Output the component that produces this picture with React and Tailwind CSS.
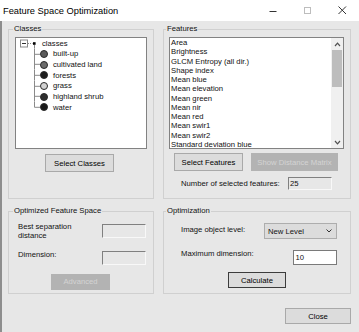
import clsx from "clsx";

const classes = [
  { name: "built-up", color: "#5a5a5a" },
  { name: "cultivated land", color: "#6c6c6c" },
  { name: "forests", color: "#1e1e1e" },
  { name: "grass", color: "#d2d2d2" },
  { name: "highland shrub", color: "#2e2e2e" },
  { name: "water", color: "#1a1a1a" },
];

const features = [
  "Area",
  "Brightness",
  "GLCM Entropy (all dir.)",
  "Shape index",
  "Mean blue",
  "Mean elevation",
  "Mean green",
  "Mean nir",
  "Mean red",
  "Mean swir1",
  "Mean swir2",
  "Standard deviation blue",
];

function Btn({ children, className, disabled }) {
  return (
    <button
      className={clsx(
        "flex items-center justify-center border leading-[9px]",
        disabled
          ? "bg-[#b3b3b3] border-[#b3b3b3] text-[#d4d4d4]"
          : "bg-[#dcdcdc] border-[#a9a9a9] text-black",
        className
      )}
    >
      {children}
    </button>
  );
}

function Group({ label, labelLeft, className, children }) {
  return (
    <div className={clsx("relative border border-[#d0d0d0]", className)}>
      <span
        className={clsx(
          "absolute top-[-6px] bg-[#e7e7e7] px-[1px] leading-[9px]",
          labelLeft
        )}
      >
        {label}
      </span>
      {children}
    </div>
  );
}

function InsetBox({ children, className }) {
  return (
    <div
      className={clsx(
        "border border-t-[#808080] border-l-[#808080] border-r-[#f8f8f8] border-b-[#f8f8f8] leading-[9px]",
        className
      )}
    >
      {children}
    </div>
  );
}

function ClassTree() {
  return (
    <div className="ml-[6px] mt-[7px] w-[132px] h-[112px] border border-[#828282] bg-white">
      <div className="flex items-center h-[10.67px] pl-[4px]">
        <svg width="22" height="10.67" className="shrink-0">
          <rect x="0.5" y="2" width="7" height="7" fill="#fff" stroke="#8a8a8a" />
          <line x1="2" y1="5.5" x2="6" y2="5.5" stroke="#333" />
          <line x1="8" y1="5.5" x2="12.5" y2="5.5" stroke="#8a8a8a" strokeDasharray="1 1" />
          <rect x="13" y="4.2" width="2.6" height="2.6" fill="#000" />
          <line x1="14.5" y1="7" x2="14.5" y2="10.67" stroke="#8a8a8a" />
        </svg>
        <span className="leading-[9px]">classes</span>
      </div>
      {classes.map((c, i) => (
        <div key={c.name} className="flex items-center h-[10.67px] pl-[18px]">
          <svg width="6" height="10.67" className="shrink-0">
            <line
              x1="0.5"
              y1="0"
              x2="0.5"
              y2={i === classes.length - 1 ? 5.3 : 10.67}
              stroke="#8a8a8a"
            />
            <line x1="0.5" y1="5.3" x2="6" y2="5.3" stroke="#8a8a8a" />
          </svg>
          <div
            className="w-[8px] h-[8px] rounded-full border border-[#2a2a2a] shrink-0"
            style={{ backgroundColor: c.color }}
          />
          <span className="ml-[5px] leading-[9px]">{c.name}</span>
        </div>
      ))}
    </div>
  );
}

function FeatureList() {
  return (
    <div className="ml-[5px] mt-[7px] w-[175px] h-[112px] border border-[#828282] bg-white flex">
      <div className="flex-1 overflow-hidden pl-[1px]">
        {features.map((f) => (
          <div key={f} className="h-[9.27px] leading-[9.27px] whitespace-nowrap">
            {f}
          </div>
        ))}
      </div>
      <div className="w-[12px] bg-[#f0f0f0] flex flex-col">
        <div className="h-[12px] flex items-center justify-center">
          <svg width="7" height="5">
            <polyline points="1,4 3.5,1.2 6,4" fill="none" stroke="#505050" strokeWidth="1.2" />
          </svg>
        </div>
        <div className="h-[37px] mx-[1px] bg-[#bdbdbd]" />
        <div className="flex-1" />
        <div className="h-[12px] flex items-center justify-center">
          <svg width="7" height="5">
            <polyline points="1,1 3.5,3.8 6,1" fill="none" stroke="#505050" strokeWidth="1.2" />
          </svg>
        </div>
      </div>
    </div>
  );
}

export default function App() {
  return (
    <div className="w-[359px] h-[332px] bg-[#e7e7e7] flex flex-col overflow-hidden opacity-[0.999] font-['Liberation_Sans',Arial,sans-serif] text-[7.7px] text-[#111]">
      <div className="h-[21px] bg-white flex items-center shrink-0">
        <span className="pl-[3px] text-[9.3px] leading-[12px] text-black">Feature Space Optimization</span>
        <div className="flex-1" />
        <svg width="8" height="10" className="mr-[27px]">
          <line x1="0.5" y1="5.5" x2="7.5" y2="5.5" stroke="#333" />
        </svg>
        <svg width="8" height="8" className="mr-[26px]">
          <rect x="0.5" y="0.5" width="6" height="6" fill="none" stroke="#bdbdbd" />
        </svg>
        <svg width="9" height="9" className="mr-[12px]">
          <line x1="0.5" y1="0.5" x2="8" y2="8" stroke="#333" />
          <line x1="8" y1="0.5" x2="0.5" y2="8" stroke="#333" />
        </svg>
      </div>

      <div className="flex-1 border-l-2 border-[#8e8e8e] pl-[6px] pt-[8px]">
        <div className="flex gap-[9px]">
          <Group label="Classes" labelLeft="left-[4px]" className="w-[146px] h-[170px]">
            <ClassTree />
            <Btn className="ml-[36px] mt-[5px] w-[69px] h-[18px]">Select Classes</Btn>
          </Group>

          <Group label="Features" labelLeft="left-[2px]" className="w-[188px] h-[170px]">
            <FeatureList />
            <div className="flex ml-[10px] mt-[4px] gap-[8px]">
              <Btn className="w-[69px] h-[18px]">Select Features</Btn>
              <Btn disabled className="w-[87px] h-[18px]">
                Show Distance Matrix
              </Btn>
            </div>
            <div className="flex items-center ml-[17px] mt-[6px]">
              <span className="w-[107px] leading-[9px]">Number of selected features:</span>
              <InsetBox className="w-[44px] h-[13px] pl-[1px] pt-[1px]">25</InsetBox>
            </div>
          </Group>
        </div>

        <div className="flex gap-[9px] mt-[12px]">
          <Group
            label="Optimized Feature Space"
            labelLeft="left-[4px]"
            className="w-[146px] h-[83px]"
          >
            <div className="flex items-start ml-[9px] mt-[9px]">
              <div className="w-[84px] leading-[9px] pt-[0.5px]">
                Best separation
                <br />
                distance
              </div>
              <InsetBox className="w-[44px] h-[14px] mt-[3px]" />
            </div>
            <div className="flex items-start ml-[9px] mt-[8px]">
              <div className="w-[84px] leading-[9px] mt-[2px]">Dimension:</div>
              <InsetBox className="w-[44px] h-[14px] mt-[3px]" />
            </div>
            <Btn disabled className="ml-[42px] mt-[9px] w-[59px] h-[16px]">
              Advanced
            </Btn>
          </Group>

          <Group label="Optimization" labelLeft="left-[2px]" className="w-[188px] h-[83px]">
            <div className="flex items-center ml-[17px] mt-[11px]">
              <span className="w-[83px] leading-[9px] -mt-[3px]">Image object level:</span>
              <div className="w-[73px] h-[16px] bg-[#dcdcdc] border border-[#adadad] flex items-center justify-between pl-[3px] pr-[4px]">
                <span className="leading-[9px]">New Level</span>
                <svg width="6" height="4">
                  <polyline points="0.5,0.5 3,3 5.5,0.5" fill="none" stroke="#333" />
                </svg>
              </div>
            </div>
            <div className="flex items-center ml-[17px] mt-[11px]">
              <span className="w-[112px] leading-[9px] -mt-[8px]">Maximum dimension:</span>
              <div className="w-[44px] h-[15px] bg-white border border-[#7a7a7a] flex items-center pl-[1.5px] leading-[9px]">
                10
              </div>
            </div>
            <Btn className="ml-[64px] mt-[7px] w-[58px] h-[16px] !border-[#3c3c3c]">
              Calculate
            </Btn>
          </Group>
        </div>

        <div className="flex justify-end pr-[8px] mt-[14px]">
          <Btn className="w-[66px] h-[16px]">Close</Btn>
        </div>
      </div>
    </div>
  );
}
